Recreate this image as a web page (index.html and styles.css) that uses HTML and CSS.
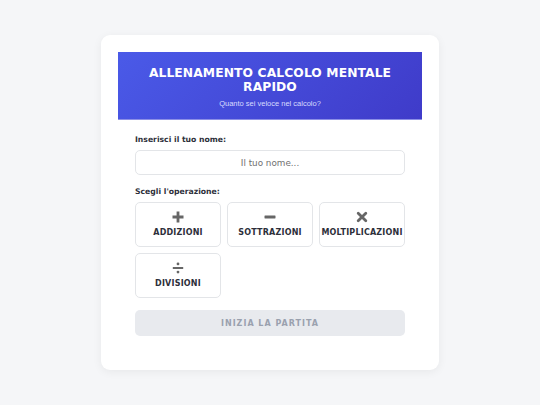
FILE: index.html
```html
<!DOCTYPE html>
<html lang="it">
<head>
<meta charset="utf-8">
<link rel="stylesheet" href="styles.css">
</head>
<body>
<div class="page">
  <div class="card">
    <div class="header">
      <h1 class="title">ALLENAMENTO CALCOLO MENTALE RAPIDO</h1>
      <p class="subtitle">Quanto sei veloce nel calcolo?</p>
    </div>
    <div class="content">
      <label class="label">Inserisci il tuo nome:</label>
      <input class="name-input" type="text" placeholder="Il tuo nome...">
      <div class="label op-label">Scegli l'operazione:</div>
      <div class="ops">
        <button class="op">
          <svg class="icon" viewBox="0 0 12 12"><path d="M4.6 0.5h2.8v4.1h4.1v2.8H7.4v4.1H4.6V7.4H0.5V4.6h4.1z" fill="#666"/></svg>
          <span>ADDIZIONI</span>
        </button>
        <button class="op">
          <svg class="icon" viewBox="0 0 12 12"><rect x="0.5" y="4.6" width="11" height="2.8" rx="0.4" fill="#666"/></svg>
          <span>SOTTRAZIONI</span>
        </button>
        <button class="op">
          <svg class="icon" viewBox="0 0 12 12"><path d="M2.2 2.2L9.8 9.8M9.8 2.2L2.2 9.8" stroke="#666" stroke-width="2.8" stroke-linecap="round"/></svg>
          <span>MOLTIPLICAZIONI</span>
        </button>
        <button class="op">
          <svg class="icon" viewBox="0 0 12 12"><circle cx="6" cy="1.9" r="1.4" fill="#666"/><rect x="0.8" y="5" width="10.4" height="2" fill="#666"/><circle cx="6" cy="10.1" r="1.4" fill="#666"/></svg>
          <span>DIVISIONI</span>
        </button>
      </div>
      <button class="start" disabled>INIZIA LA PARTITA</button>
    </div>
  </div>
</div>
</body>
</html>
```
FILE: styles.css
```css
* { box-sizing: border-box; }
html, body { margin: 0; padding: 0; }
body {
  background: #f5f6f8;
  font-family: "DejaVu Sans", Verdana, sans-serif;
  width: 540px;
  height: 405px;
}
.page {
  display: flex;
  justify-content: center;
  padding-top: 35px;
}
.card {
  width: 338px;
  background: #fff;
  border-radius: 9px;
  box-shadow: 0 2px 10px rgba(0,0,0,0.06);
  padding: 17px 17px 34px;
}
.header {
  background: linear-gradient(135deg, #4a5ae8 0%, #3f3bc9 100%);
  border-bottom: 1px solid #8c8fe6;
  color: #fff;
  text-align: center;
  padding: 14px 10px 11px;
}
.title {
  margin: 0;
  font-size: 12.3px;
  line-height: 14px;
  font-weight: bold;
  letter-spacing: 0.1px;
}
.subtitle {
  margin: 5px 0 0;
  font-family: "Liberation Sans", Arial, sans-serif;
  font-size: 7.5px;
  color: #d8dbff;
}
.content {
  padding: 14px 17px 0;
  display: flex;
  flex-direction: column;
}
.label {
  font-size: 7.7px;
  line-height: 11px;
  font-weight: bold;
  color: #2d2f3a;
  margin-bottom: 5px;
}
.name-input {
  width: 100%;
  height: 25px;
  border: 1px solid #e3e5e8;
  border-radius: 5px;
  text-align: center;
  font-family: "DejaVu Sans", sans-serif;
  font-size: 8.8px;
  color: #333;
  outline: none;
}
.name-input::placeholder { color: #6f6f6f; }
.op-label { margin-top: 11px; }
.ops {
  display: grid;
  grid-template-columns: repeat(3, 86px);
  gap: 6px;
}
.op {
  height: 45px;
  background: #fff;
  border: 1px solid #e3e5e8;
  border-radius: 5px;
  display: flex;
  flex-direction: column;
  align-items: center;
  justify-content: center;
  gap: 5px;
  padding: 0;
  font-family: "DejaVu Sans", sans-serif;
  font-size: 8px;
  line-height: 10px;
  font-weight: bold;
  letter-spacing: 0.2px;
  color: #2d2f3a;
}
.icon { width: 12px; height: 12px; }
.start {
  margin-top: 12px;
  height: 26px;
  border: none;
  border-radius: 5px;
  background: #e8eaee;
  color: #9aa1ae;
  font-family: "DejaVu Sans", sans-serif;
  font-size: 8px;
  font-weight: bold;
  letter-spacing: 1px;
}
```
